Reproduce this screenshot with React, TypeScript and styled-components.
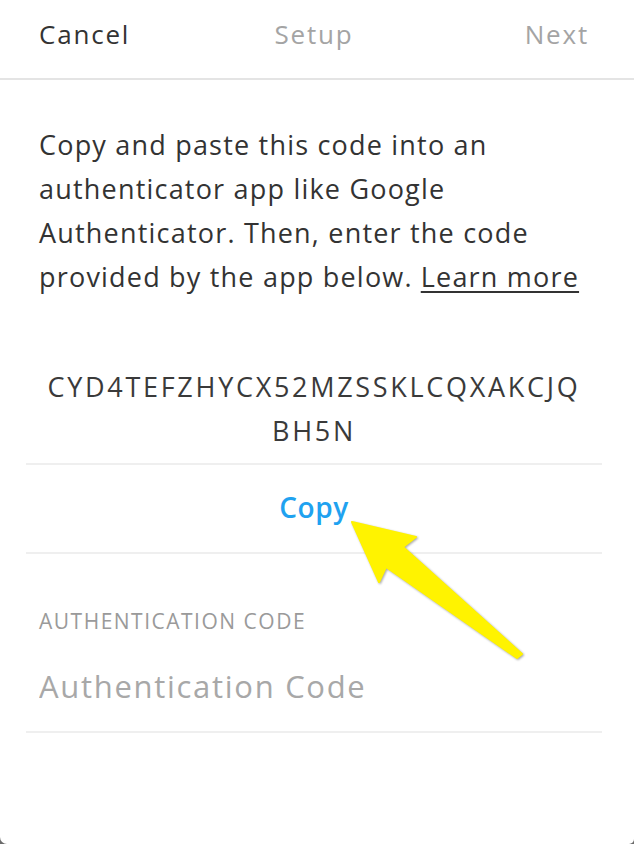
import styled, { createGlobalStyle } from "styled-components";

const GlobalStyle = createGlobalStyle`
  html, body {
    margin: 0;
    padding: 0;
    background: #6b6b6b;
  }
  * {
    box-sizing: border-box;
  }
`;

const Panel = styled.div`
  position: relative;
  width: 634px;
  height: 844px;
  background: #ffffff;
  border-radius: 0 0 5px 7px;
  overflow: hidden;
  font-family: "Open Sans", "Liberation Sans", sans-serif;
  color: #333333;
`;

const Header = styled.header`
  display: grid;
  grid-template-columns: 1fr auto 1fr;
  align-items: center;
  height: 80px;
  padding: 0 45px 10px 39px;
  border-bottom: 2px solid #e4e4e4;
  font-size: 26px;
`;

const NavItem = styled.span<{ $muted?: boolean; $align?: "start" | "end" }>`
  justify-self: ${(p) => p.$align ?? "center"};
  color: ${(p) => (p.$muted ? "#a4a4a4" : "#333333")};
  letter-spacing: 1.8px;
`;

const Content = styled.main`
  padding: 0 32px 0 26px;
`;

const Intro = styled.p`
  margin: 43px 0 0;
  padding: 0 0 0 13px;
  font-size: 27px;
  line-height: 44px;
  letter-spacing: 1.2px;
  color: #333333;
`;

const LearnMore = styled.a`
  margin-left: 8px;
  color: #333333;
  text-decoration: underline;
  text-underline-offset: 4px;
  text-decoration-thickness: 2px;
`;

const Code = styled.div`
  margin-top: 66px;
  padding-bottom: 10px;
  text-align: center;
  font-size: 27px;
  line-height: 44px;
  letter-spacing: 2.7px;
  color: #3a3a3a;
`;

const Divider = styled.hr`
  margin: 0;
  border: none;
  border-top: 2px solid #efefef;
`;

const CopyRow = styled.div`
  display: flex;
  align-items: center;
  justify-content: center;
  height: 87px;
  padding-bottom: 4px;
`;

const CopyButton = styled.button`
  background: none;
  border: none;
  padding: 0;
  font-family: inherit;
  font-size: 28px;
  font-weight: 600;
  letter-spacing: 0.6px;
  color: #1fa2f0;
  cursor: pointer;
`;

const FieldLabel = styled.label`
  display: block;
  margin-top: 55px;
  padding-left: 13px;
  font-size: 21px;
  line-height: 24px;
  letter-spacing: 1.5px;
  text-transform: uppercase;
  color: #9a9a9a;
`;

const CodeInput = styled.input`
  display: block;
  width: 100%;
  margin-top: 33px;
  padding: 0 0 25px 13px;
  border: none;
  border-bottom: 2px solid #efefef;
  outline: none;
  font-family: inherit;
  font-size: 31px;
  line-height: 40px;
  letter-spacing: 1.7px;
  color: #333333;

  &::placeholder {
    color: #a8a8a8;
  }
`;

const Arrow = styled.svg`
  position: absolute;
  left: 345px;
  top: 515px;
  width: 185px;
  height: 150px;
  pointer-events: none;
  filter: drop-shadow(1px 1px 1px rgba(0, 0, 0, 0.35));
`;

const SECRET = "CYD4TEFZHYCX52MZSSKLCQXAKCJQBH5N";

const chunk = (s: string, n: number) => {
  const out: string[] = [];
  for (let i = 0; i < s.length; i += n) out.push(s.slice(i, i + n));
  return out;
};

export default function App() {
  return (
    <>
      <GlobalStyle />
      <Panel>
        <Header>
          <NavItem $align="start">Cancel</NavItem>
          <NavItem $muted>Setup</NavItem>
          <NavItem $muted $align="end">
            Next
          </NavItem>
        </Header>
        <Content>
          <Intro>
            Copy and paste this code into an authenticator app like Google
            Authenticator. Then, enter the code provided by the app below.
            <LearnMore href="#">Learn more</LearnMore>
          </Intro>
          <Code>
            {chunk(SECRET, 28).map((part) => (
              <div key={part}>{part}</div>
            ))}
          </Code>
          <Divider />
          <CopyRow>
            <CopyButton type="button">Copy</CopyButton>
          </CopyRow>
          <Divider />
          <FieldLabel htmlFor="auth-code">Authentication Code</FieldLabel>
          <CodeInput id="auth-code" placeholder="Authentication Code" />
        </Content>
        <Arrow viewBox="0 0 185 150">
          <polygon
            points="7,7 71,22 58,32 177,139 172,143 41,52 34,67"
            fill="#fff300"
            stroke="#fff300"
            strokeWidth="2"
            strokeLinejoin="round"
          />
        </Arrow>
      </Panel>
    </>
  );
}
